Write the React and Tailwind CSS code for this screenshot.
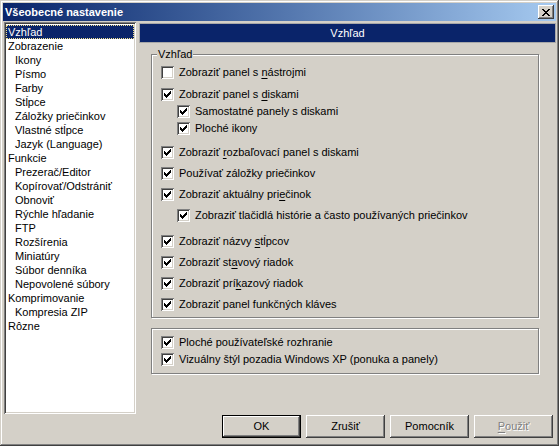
import React from "react";

const font = { fontFamily: '"Liberation Sans", Arial, sans-serif' };

const Tick = () => (
  <svg width="7" height="7" viewBox="0 0 7 7" shapeRendering="crispEdges">
    <path
      d="M0 2h1v3H0zM1 3h1v3H1zM2 4h1v3H2zM3 3h1v3H3zM4 2h1v3H4zM5 1h1v3H5zM6 0h1v3H6z"
      fill="#000"
    />
  </svg>
);

const CheckBox = ({ checked }) => (
  <span className="w-[13px] h-[13px] shrink-0 bg-white flex items-center justify-center shadow-[inset_1px_1px_#808080,inset_-1px_-1px_#fff,inset_2px_2px_#404040,inset_-2px_-2px_#d4d0c8]">
    {checked && <Tick />}
  </span>
);

const U = ({ children }) => <span className="underline underline-offset-[2px]">{children}</span>;

const Row = ({ checked = true, sub, mt, children }) => (
  <div
    className={`flex items-center h-[13px] ${sub ? "pl-[25px]" : "pl-[9px]"}`}
    style={{ marginTop: mt }}
  >
    <CheckBox checked={checked} />
    <span className="ml-[5px] text-[11px] leading-[13px] text-black whitespace-nowrap">{children}</span>
  </div>
);

const tree = [
  ["Vzhľad", 0],
  ["Zobrazenie", 0],
  ["Ikony", 1],
  ["Písmo", 1],
  ["Farby", 1],
  ["Stĺpce", 1],
  ["Záložky priečinkov", 1],
  ["Vlastné stĺpce", 1],
  ["Jazyk (Language)", 1],
  ["Funkcie", 0],
  ["Prezerač/Editor", 1],
  ["Kopírovať/Odstrániť", 1],
  ["Obnoviť", 1],
  ["Rýchle hľadanie", 1],
  ["FTP", 1],
  ["Rozšírenia", 1],
  ["Miniatúry", 1],
  ["Súbor denníka", 1],
  ["Nepovolené súbory", 1],
  ["Komprimovanie", 0],
  ["Kompresia ZIP", 1],
  ["Rôzne", 0],
];

const raised =
  "shadow-[inset_-1px_-1px_#404040,inset_1px_1px_#fff,inset_-2px_-2px_#808080,inset_2px_2px_#d4d0c8]";

const Button = ({ children, isDefault, disabled }) => (
  <div
    className={`w-[79px] h-[23px] flex items-center justify-center text-[11px] bg-[#d4d0c8] ${
      isDefault
        ? "border border-black shadow-[inset_-1px_-1px_#404040,inset_1px_1px_#fff,inset_-2px_-2px_#808080]"
        : raised
    } ${disabled ? "text-[#808080] [text-shadow:1px_1px_#fff]" : "text-black"}`}
  >
    {children}
  </div>
);

export default function App() {
  return (
    <div
      style={font}
      className="w-[559px] h-[446px] bg-[#d4d0c8] p-[3px] flex flex-col shadow-[inset_-1px_-1px_#404040,inset_1px_1px_#d4d0c8,inset_-2px_-2px_#808080,inset_2px_2px_#fff]"
    >
      {/* title bar */}
      <div className="h-[18px] flex items-center justify-between pl-[2px] pr-[2px] bg-gradient-to-r from-[#0a246a] to-[#a6caf0]">
        <span className="text-white font-bold text-[11px] leading-none">Všeobecné nastavenie</span>
        <div className={`w-[16px] h-[14px] bg-[#d4d0c8] flex items-center justify-center ${raised}`}>
          <svg width="8" height="7" viewBox="0 0 8 7" shapeRendering="crispEdges">
            <path
              d="M0 0h2v1H0zM6 0h2v1H6zM1 1h2v1H1zM5 1h2v1H5zM2 2h4v1H2zM3 3h2v1H3zM2 4h4v1H2zM1 5h2v1H1zM5 5h2v1H5zM0 6h2v1H0zM6 6h2v1H6z"
              fill="#000"
            />
          </svg>
        </div>
      </div>

      {/* body */}
      <div className="flex mt-[1px]">
        <div className="ml-[1px] w-[132px] h-[392px] bg-white p-[2px] shadow-[inset_1px_1px_#808080,inset_-1px_-1px_#fff,inset_2px_2px_#404040,inset_-2px_-2px_#d4d0c8]">
          <div className="pt-[1px]">
            {tree.map(([label, level], i) => (
              <div
                key={label}
                className={`h-[14px] flex items-center text-[11px] leading-none ${
                  i === 0
                    ? "bg-[#0a246a] text-white outline-1 outline-dotted outline-[#f0e090] -outline-offset-1"
                    : "text-black"
                } ${level ? "pl-[9px]" : "pl-[2px]"}`}
              >
                {label}
              </div>
            ))}
          </div>
        </div>

        <div className="ml-[3px] mt-[1px] w-[417px] flex flex-col">
          <div className="h-[20px] bg-[#0a246a] border border-[#a8a8a8] flex items-center justify-center text-white text-[11px]">
            Vzhľad
          </div>

          <div className="relative mt-[11px] ml-[12px] w-[388px] border border-[#808080] shadow-[inset_1px_1px_#fff,1px_1px_#fff] pb-[6px]">
            <span className="absolute -top-[7px] left-[5px] px-[1px] bg-[#d4d0c8] text-[11px] leading-[13px] text-black">
              Vzhľad
            </span>
            <Row checked={false} mt={11}>
              Zobraziť panel s <U>n</U>ástrojmi
            </Row>
            <Row mt={9}>
              Zobraziť panel s <U>d</U>iskami
            </Row>
            <Row sub mt={4}>Samostatné panely s diskami</Row>
            <Row sub mt={4}>Ploché ikony</Row>
            <Row mt={11}>
              Zobraziť <U>r</U>ozbaľovací panel s diskami
            </Row>
            <Row mt={8}>Používať záložky priečinkov</Row>
            <Row mt={8}>
              Zobraziť aktuálny pri<U>e</U>činok
            </Row>
            <Row sub mt={8}>Zobraziť tlačidlá histórie a často používaných priečinkov</Row>
            <Row mt={13}>
              Zobraziť názvy <U>s</U>tĺpcov
            </Row>
            <Row mt={8}>
              Zobraziť st<U>a</U>vový riadok
            </Row>
            <Row mt={8}>
              Zobraziť prí<U>k</U>azový riadok
            </Row>
            <Row mt={8}>Zobraziť panel funkčných kláves</Row>
          </div>

          <div className="mt-[10px] ml-[12px] w-[388px] border border-[#808080] shadow-[inset_1px_1px_#fff,1px_1px_#fff] pb-[7px]">
            <Row mt={7}>Ploché používateľské rozhranie</Row>
            <Row mt={4}>Vizuálny štýl pozadia Windows XP (ponuka a panely)</Row>
          </div>
        </div>
      </div>

      {/* buttons */}
      <div className="flex justify-end gap-[5px] mt-[1px] mr-[3px]">
        <Button isDefault>OK</Button>
        <Button>Zrušiť</Button>
        <Button>Pomocník</Button>
        <Button disabled>
          <U>P</U>oužiť
        </Button>
      </div>
    </div>
  );
}
